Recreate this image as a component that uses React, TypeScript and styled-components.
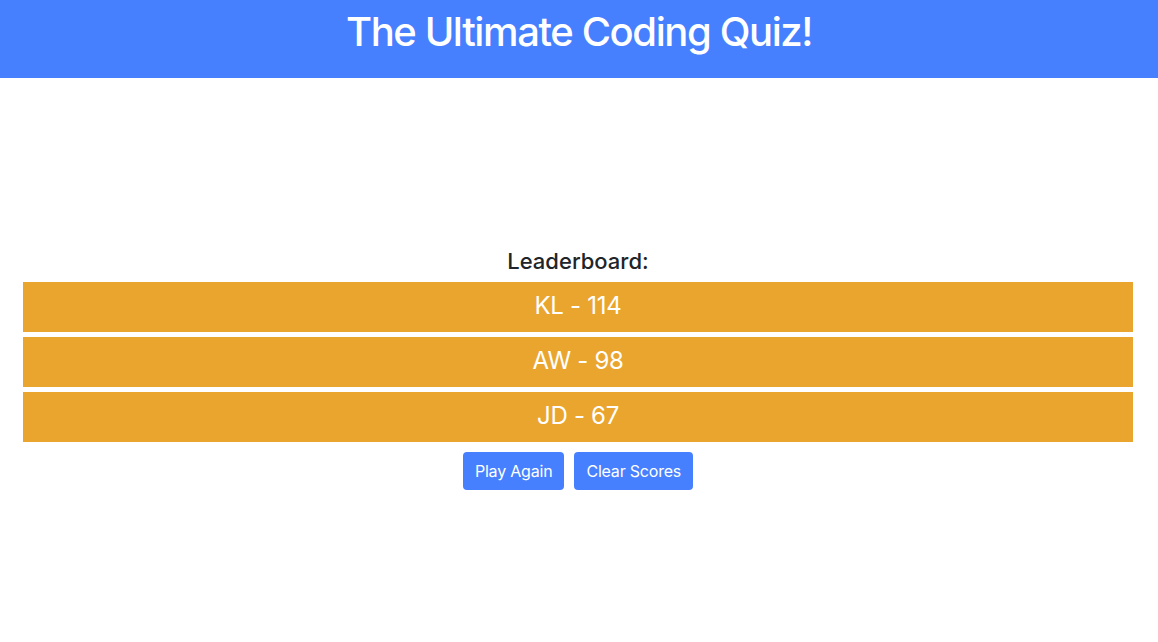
import React from "react";
import styled, { createGlobalStyle } from "styled-components";

const Global = createGlobalStyle`
  html, body { margin: 0; padding: 0; background: #fff; }
  body { font-family: Inter, "Noto Sans", sans-serif; color: #212529; }
  * { box-sizing: border-box; }
`;

const Header = styled.header`
  background: #4680ff;
  height: 78px;
  padding-top: 8px;
  display: flex;
  justify-content: center;
`;

const Title = styled.h1`
  margin: 0;
  font-size: 40px;
  line-height: 48px;
  font-weight: 500;
  letter-spacing: -1.4px;
  color: #fff;
`;

const Container = styled.main`
  max-width: 1140px;
  margin: 0 auto;
  padding: 171px 16px 0 14px;
  display: flex;
  flex-direction: column;
  align-items: center;
`;

const Heading = styled.h5`
  margin: 0 0 8px;
  font-size: 22px;
  line-height: 25px;
  font-weight: 500;
  color: #212529;
`;

const List = styled.ol`
  list-style: none;
  margin: 0;
  padding: 0;
  width: 100%;
  display: flex;
  flex-direction: column;
  gap: 5px;
`;

const Row = styled.li`
  height: 50px;
  background: #eaa52f;
  color: #fff;
  font-size: 24px;
  letter-spacing: -0.3px;
  display: flex;
  align-items: center;
  justify-content: center;
  padding-bottom: 3px;
`;

const Buttons = styled.div`
  display: flex;
  gap: 10px;
  margin-top: 10px;
`;

const Button = styled.button`
  font-family: Inter, "Noto Sans", sans-serif;
  height: 38px;
  padding: 0 12px;
  border: none;
  border-radius: 4px;
  background: #4680ff;
  color: #fff;
  font-size: 16px;
  letter-spacing: -0.2px;
  cursor: pointer;
`;

const scores = [
  { name: "KL", score: 114 },
  { name: "AW", score: 98 },
  { name: "JD", score: 67 },
];

export default function App() {
  return (
    <>
      <Global />
      <Header>
        <Title>The Ultimate Coding Quiz!</Title>
      </Header>
      <Container>
        <Heading>Leaderboard:</Heading>
        <List>
          {scores.map((s) => (
            <Row key={s.name}>
              {s.name} - {s.score}
            </Row>
          ))}
        </List>
        <Buttons>
          <Button>Play Again</Button>
          <Button>Clear Scores</Button>
        </Buttons>
      </Container>
    </>
  );
}
